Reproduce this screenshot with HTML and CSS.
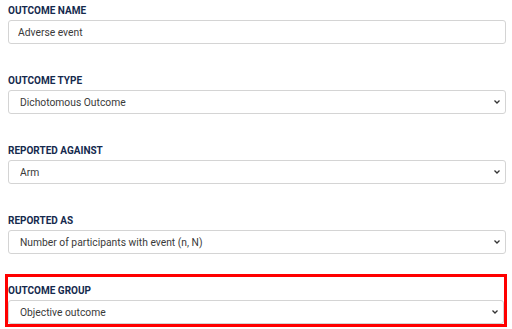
FILE: index.html
```html
<!DOCTYPE html>
<html lang="en">
<head>
    <meta charset="UTF-8">
    <title>Outcome</title>
    <link rel="stylesheet" href="styles.css">
</head>
<body>
    <form class="outcome-form">
        <div class="field">
            <label for="outcome-name">Outcome name</label>
            <input type="text" id="outcome-name" class="control" value="Adverse event">
        </div>
        <div class="field">
            <label for="outcome-type">Outcome type</label>
            <div class="select-wrap">
                <select id="outcome-type" class="control">
                    <option>Dichotomous Outcome</option>
                </select>
                <svg class="chevron" width="8" height="6" viewBox="0 0 8 6"><path d="M1.5 1.5 L4 4 L6.5 1.5" fill="none" stroke="#333" stroke-width="1.3"/></svg>
            </div>
        </div>
        <div class="field">
            <label for="reported-against">Reported against</label>
            <div class="select-wrap">
                <select id="reported-against" class="control">
                    <option>Arm</option>
                </select>
                <svg class="chevron" width="8" height="6" viewBox="0 0 8 6"><path d="M1.5 1.5 L4 4 L6.5 1.5" fill="none" stroke="#333" stroke-width="1.3"/></svg>
            </div>
        </div>
        <div class="field field-last">
            <label for="reported-as">Reported as</label>
            <div class="select-wrap">
                <select id="reported-as" class="control">
                    <option>Number of participants with event (n, N)</option>
                </select>
                <svg class="chevron" width="8" height="6" viewBox="0 0 8 6"><path d="M1.5 1.5 L4 4 L6.5 1.5" fill="none" stroke="#333" stroke-width="1.3"/></svg>
            </div>
        </div>
        <div class="field highlight">
            <label for="outcome-group">Outcome group</label>
            <div class="select-wrap">
                <select id="outcome-group" class="control">
                    <option>Objective outcome</option>
                </select>
                <svg class="chevron" width="8" height="6" viewBox="0 0 8 6"><path d="M1.5 1.5 L4 4 L6.5 1.5" fill="none" stroke="#333" stroke-width="1.3"/></svg>
            </div>
        </div>
    </form>
</body>
</html>
```

FILE: styles.css
```css
body {
    margin: 0;
    padding: 5px 6px 0 8px;
    background: #fff;
    font-family: Roboto, "Liberation Sans", sans-serif;
}
.outcome-form {
    display: flex;
    flex-direction: column;
}
.field {
    display: flex;
    flex-direction: column;
    margin-bottom: 31px;
}
.field label {
    font-size: 10px;
    line-height: 12px;
    font-weight: 700;
    text-transform: uppercase;
    color: #152a4e;
    margin-bottom: 3px;
}
.field-last {
    margin-bottom: 20px;
}
.highlight {
    border: 3px solid #ff0000;
    margin: 0 -1px 0 -3px;
    padding: 8px 0 0 0;
}
.control {
    box-sizing: border-box;
    width: 100%;
    height: 24px;
    margin: 0;
    border: 1px solid #d4d4d4;
    border-radius: 3px;
    background: #fff;
    font-family: Roboto, "Liberation Sans", sans-serif;
    font-size: 10.3px;
    color: #3a3a3a;
    padding: 0 9px;
    outline: none;
}
select.control {
    appearance: none;
    -webkit-appearance: none;
    padding-left: 11px;
}
.select-wrap {
    position: relative;
}
.chevron {
    position: absolute;
    right: 5px;
    top: 9px;
    pointer-events: none;
}
```
